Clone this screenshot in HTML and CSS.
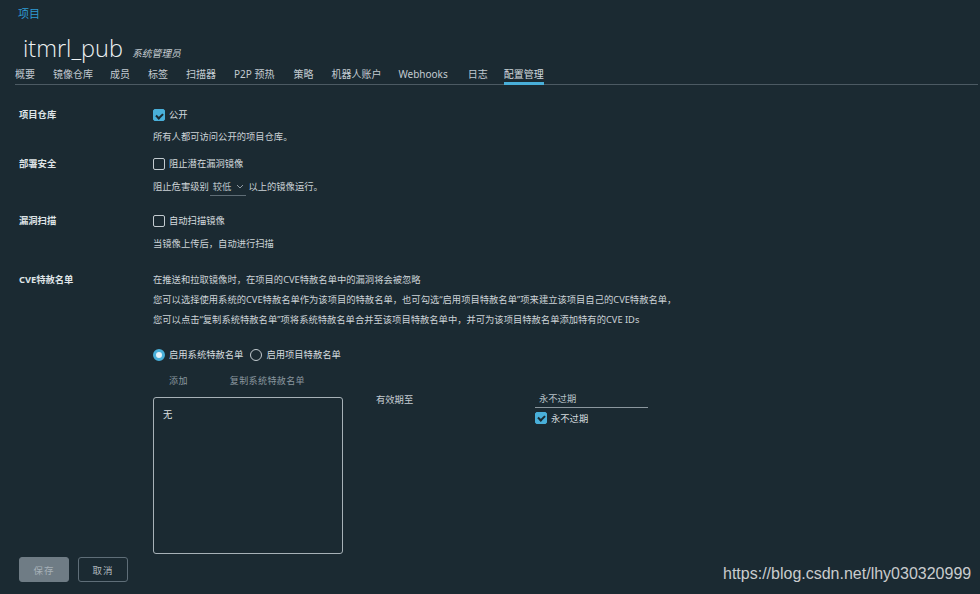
FILE: index.html
```html
<!DOCTYPE html>
<html lang="zh-CN">
<head>
<meta charset="utf-8">
<title>配置管理</title>
<link rel="stylesheet" href="styles.css">
</head>
<body>
<div class="page">
  <div class="crumb"><a href="#">项目</a></div>
  <div class="title-row">
    <h1 class="title">itmrl_pub</h1>
    <span class="role">系统管理员</span>
  </div>
  <nav class="tabs">
    <a class="tab" href="#">概要</a>
    <a class="tab" href="#">镜像仓库</a>
    <a class="tab" href="#">成员</a>
    <a class="tab" href="#">标签</a>
    <a class="tab" href="#">扫描器</a>
    <a class="tab" href="#">P2P 预热</a>
    <a class="tab" href="#">策略</a>
    <a class="tab" href="#">机器人账户</a>
    <a class="tab" href="#">Webhooks</a>
    <a class="tab" href="#">日志</a>
    <a class="tab active" href="#">配置管理</a>
  </nav>

  <div class="form">
    <div class="row r1">
      <div class="label">项目仓库</div>
      <div class="field">
        <label class="line"><span class="cb checked"></span>公开</label>
        <div class="line desc d1">所有人都可访问公开的项目仓库。</div>
      </div>
    </div>

    <div class="row r2">
      <div class="label">部署安全</div>
      <div class="field">
        <label class="line"><span class="cb"></span>阻止潜在漏洞镜像</label>
        <div class="line desc d2">阻止危害级别<span class="select">较低<svg class="chev" width="8" height="5" viewBox="0 0 8 5"><path d="M1 1l3 3 3-3" fill="none" stroke="#8f9ba3" stroke-width="1"/></svg></span>以上的镜像运行。</div>
      </div>
    </div>

    <div class="row r3">
      <div class="label">漏洞扫描</div>
      <div class="field">
        <label class="line"><span class="cb"></span>自动扫描镜像</label>
        <div class="line desc d2">当镜像上传后，自动进行扫描</div>
      </div>
    </div>

    <div class="row r4">
      <div class="label">CVE特赦名单</div>
      <div class="field">
        <div class="line desc">在推送和拉取镜像时，在项目的CVE特赦名单中的漏洞将会被忽略</div>
        <div class="line desc">您可以选择使用系统的CVE特赦名单作为该项目的特赦名单，也可勾选“启用项目特赦名单”项来建立该项目自己的CVE特赦名单，</div>
        <div class="line desc">您可以点击“复制系统特赦名单”项将系统特赦名单合并至该项目特赦名单中，并可为该项目特赦名单添加特有的CVE IDs</div>

        <div class="line radios">
          <label class="radio-item"><span class="rd on"></span>启用系统特赦名单</label>
          <label class="radio-item"><span class="rd"></span>启用项目特赦名单</label>
        </div>
        <div class="line actions">
          <span class="act">添加</span>
          <span class="act">复制系统特赦名单</span>
        </div>
        <div class="cve-area">
          <div class="cve-box">无</div>
          <div class="expire-label">有效期至</div>
          <div class="expire">
            <div class="expire-input">永不过期</div>
            <label class="expire-check"><span class="cb checked"></span>永不过期</label>
          </div>
        </div>
      </div>
    </div>
  </div>

  <div class="buttons">
    <button class="btn save">保存</button>
    <button class="btn cancel">取消</button>
  </div>
</div>
<div class="watermark">https://blog.csdn.net/lhy030320999</div>
</body>
</html>
```
FILE: styles.css
```css
* { box-sizing: border-box; }
html, body {
  margin: 0;
  padding: 0;
  background: #1b2a32;
  width: 980px;
  height: 594px;
  overflow: hidden;
}
body {
  font-family: "Noto Sans", "Noto Sans CJK SC", sans-serif;
  font-size: 9.3px;
  color: #d5dbdf;
  position: relative;
}
.page {
  padding: 4px 2px 0 15px;
}
.crumb {
  height: 20px;
  line-height: 20px;
  padding-left: 3px;
}
.crumb a {
  color: #2f9bd4;
  text-decoration: none;
  font-size: 11px;
}
.title-row {
  display: flex;
  align-items: baseline;
  margin-top: 10px;
  padding-left: 8px;
  height: 28px;
}
.title {
  margin: 0;
  font-family: "Open Sans", "Noto Sans", sans-serif;
  font-weight: 300;
  font-size: 23.5px;
  line-height: 28px;
  color: #eef2f4;
}
.role {
  font-style: italic;
  font-size: 9.8px;
  margin-left: 9px;
  color: #c9d0d4;
}
.tabs {
  display: flex;
  margin-top: 3px;
  border-bottom: 1px solid #4c5a63;
  height: 20px;
  font-size: 10px;
}
.tab {
  color: #c3cbd1;
  text-decoration: none;
  line-height: 18px;
  height: 19px;
  margin-right: 16px;
}
.tab.active {
  border-bottom: 3px solid #49afd9;
  color: #d3dade;
  height: 20px;
  margin-bottom: -1px;
}
.tab:nth-child(1) { margin-right: 18px; }
.tab:nth-child(2) { margin-right: 17px; }
.tab:nth-child(3) { margin-right: 18px; }
.tab:nth-child(4) { margin-right: 18px; }
.tab:nth-child(5) { margin-right: 18px; }
.tab:nth-child(6) { margin-right: 19px; }
.tab:nth-child(7) { margin-right: 18px; }
.tab:nth-child(8) { margin-right: 17px; }
.tab:nth-child(9) { margin-right: 20px; }
.tab:nth-child(10) { margin-right: 16px; }

.form {
  padding-left: 4px;
  margin-top: 20px;
}
.row {
  display: grid;
  grid-template-columns: 134px 1fr;
}
.label {
  font-weight: 700;
  line-height: 20px;
  color: #dfe4e7;
}
.line {
  display: flex;
  align-items: center;
  height: 20px;
  line-height: 20px;
}
.desc { color: #ccd3d7; }
.d1 { margin-top: 2px; }
.d2 { margin-top: 3px; }
.r2 { margin-top: 7px; }
.r3 { margin-top: 14px; }
.r4 { margin-top: 16px; }

.cb {
  width: 12px;
  height: 12px;
  border: 1px solid #c3cbd0;
  border-radius: 2px;
  margin-right: 4px;
  flex: none;
  position: relative;
}
.cb.checked {
  background: #49afd9;
  border-color: #49afd9;
}
.cb.checked::after {
  content: "";
  position: absolute;
  left: 3px;
  top: 1.5px;
  width: 3px;
  height: 5px;
  border-right: 2px solid #1b2a32;
  border-bottom: 2px solid #1b2a32;
  transform: rotate(45deg);
}
.select {
  display: inline-flex;
  align-items: center;
  height: 17px;
  margin: 0 2px 0 1px;
  padding: 0 1px 0 3px;
  border-bottom: 1px solid #5f6d76;
  color: #b9c2c8;
  line-height: 16px;
}
.chev { margin-left: 5px; margin-right: 1px; }

.radios { margin-top: 15px; gap: 7px; }
.radio-item { display: flex; align-items: center; }
.rd {
  width: 12px;
  height: 12px;
  border-radius: 50%;
  border: 1px solid #c3cbd0;
  margin-right: 4px;
}
.rd.on {
  border: 3.5px solid #49afd9;
  background: #e6f2f8;
}
.actions {
  margin-top: 6px;
  padding-left: 16px;
  gap: 42px;
  color: #8a979f;
  font-size: 9px;
  letter-spacing: 0.4px;
}
.cve-area {
  display: flex;
  margin-top: 6px;
}
.cve-box {
  width: 190px;
  height: 157px;
  border: 1px solid #a7b1b7;
  border-radius: 3px;
  padding: 9px 9px;
  line-height: 16px;
  color: #dbe0e3;
}
.expire-label {
  margin-left: 33px;
  line-height: 16px;
  margin-top: -5px;
  color: #c6cdd2;
  width: 159px;
}
.expire { margin-top: -5px; }
.expire-input {
  width: 113px;
  height: 16px;
  line-height: 14px;
  padding-left: 4px;
  border-bottom: 1px solid #8b979e;
  color: #b8c1c7;
}
.expire-check {
  display: flex;
  align-items: center;
  height: 17px;
  margin-top: 1px;
  color: #d5dbdf;
}

.buttons {
  display: flex;
  gap: 9px;
  margin-top: 3px;
  padding-left: 4px;
}
.btn {
  width: 50px;
  height: 25px;
  border-radius: 3px;
  font-family: "Noto Sans", "Noto Sans CJK SC", sans-serif;
  font-size: 9.5px;
  letter-spacing: 1px;
  padding: 0;
}
.save {
  background: #6f7c85;
  border: 1px solid #6f7c85;
  color: #a7b1b8;
}
.cancel {
  background: transparent;
  border: 1px solid #5f6e78;
  color: #b0b9bf;
}
.watermark {
  position: absolute;
  left: 723px;
  top: 564px;
  font-family: "Liberation Sans", Arial, sans-serif;
  font-size: 16px;
  line-height: 20px;
  color: #c9ccce;
}
```
